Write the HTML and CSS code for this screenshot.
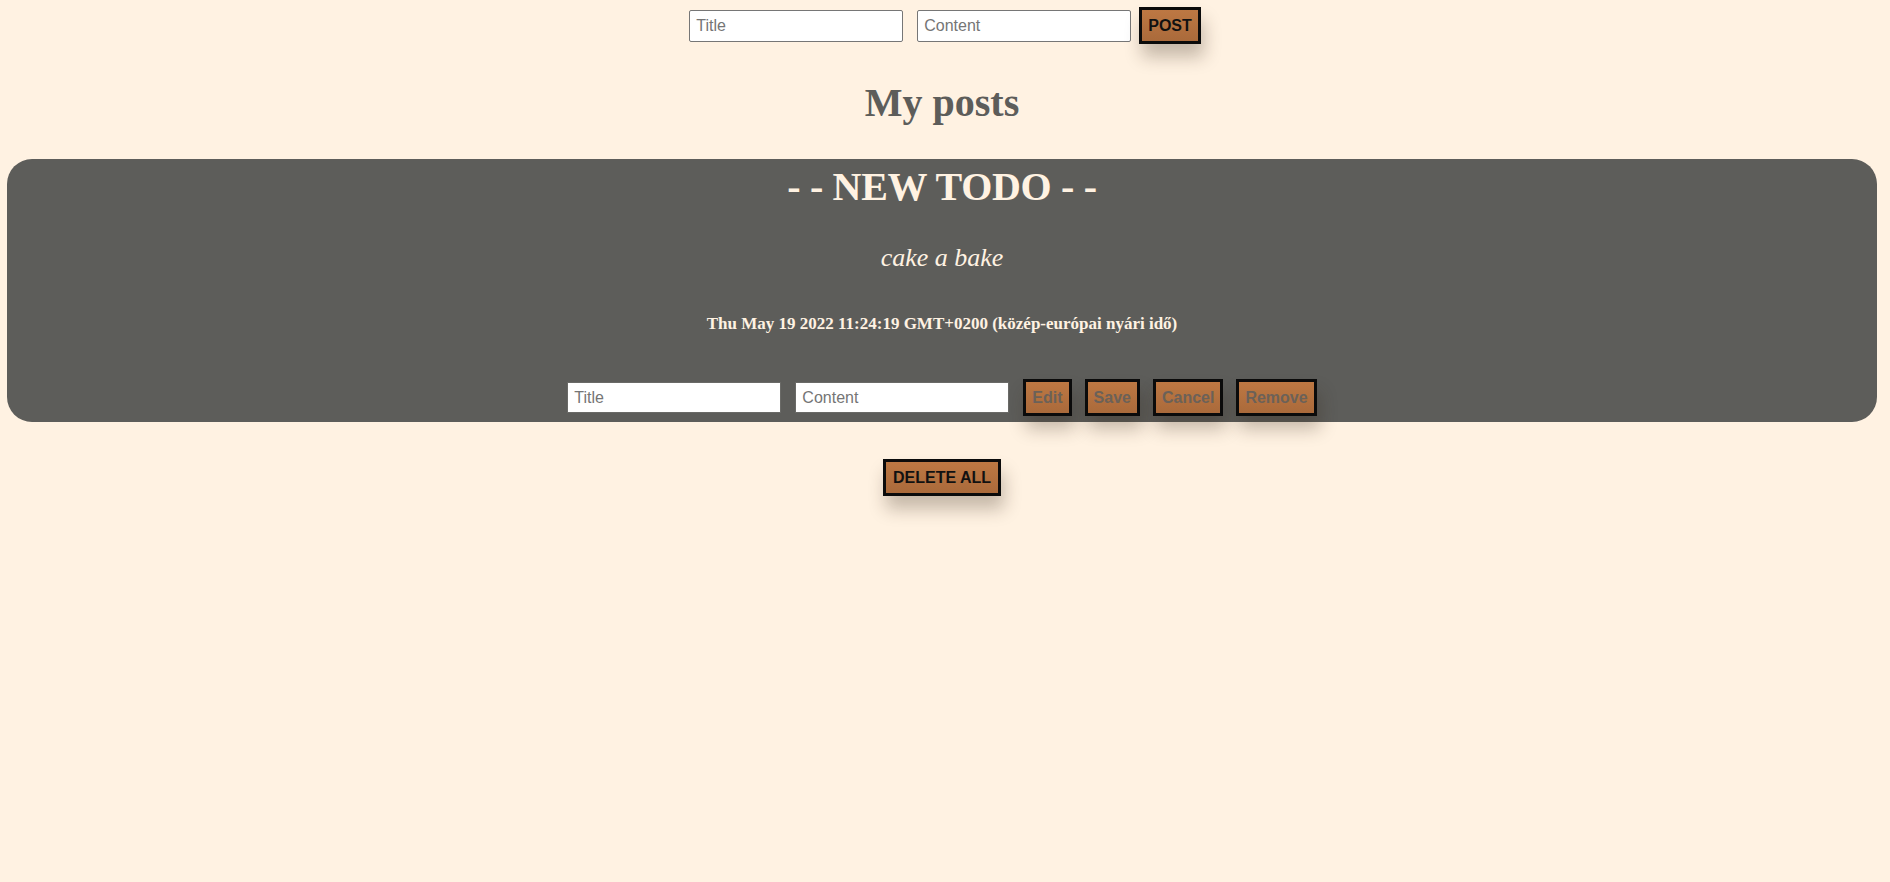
FILE: index.html
```html
<!DOCTYPE html>
<html lang="hu">
<head>
<meta charset="utf-8">
<title>My posts</title>
<link rel="stylesheet" href="styles.css">
</head>
<body>
  <form class="new-form">
    <input class="field" type="text" placeholder="Title">
    <input class="field" type="text" placeholder="Content">
    <button class="btn" type="button">POST</button>
  </form>
  <main class="page">
    <h1 class="page-title">My posts</h1>
    <section class="card">
      <h1 class="card-title">- - NEW TODO - -</h1>
      <h2 class="card-content">cake a bake</h2>
      <p class="card-date">Thu May 19 2022 11:24:19 GMT+0200 (közép-európai nyári idő)</p>
      <div class="card-actions">
        <input class="field field-inner" type="text" placeholder="Title">
        <input class="field field-inner" type="text" placeholder="Content">
        <button class="btn btn-muted" type="button">Edit</button>
        <button class="btn btn-muted" type="button">Save</button>
        <button class="btn btn-muted" type="button">Cancel</button>
        <button class="btn btn-muted" type="button">Remove</button>
      </div>
    </section>
    <div class="footer-actions">
      <button class="btn" type="button">DELETE ALL</button>
    </div>
  </main>
</body>
</html>
```

FILE: styles.css
```css
html, body {
  margin: 0;
  padding: 0;
}

body {
  background: #fff2e2;
  font-family: "Liberation Serif", "Times New Roman", serif;
  min-height: 882px;
}

.new-form {
  display: flex;
  justify-content: center;
  align-items: center;
  margin: 0;
  padding-top: 7px;
}

.new-form .field + .field {
  margin-left: 14px;
}

.new-form .btn {
  margin-left: 8px;
}

.field {
  box-sizing: border-box;
  width: 214px;
  height: 32px;
  padding: 6px 6px;
  border: 1px solid #767676;
  border-radius: 2px;
  background: #ffffff;
  font-family: "Liberation Sans", Arial, sans-serif;
  font-size: 16px;
  color: #222;
  outline: none;
}

.field::placeholder {
  color: #757575;
}

.btn {
  box-sizing: border-box;
  height: 37px;
  padding: 0 6px;
  border: 3px solid #0b0b0b;
  border-radius: 0;
  background: linear-gradient(#bd7843, #aa6a3b);
  font-family: "Liberation Sans", Arial, sans-serif;
  font-size: 16px;
  font-weight: bold;
  color: #111;
  box-shadow: 3px 13px 17px rgba(50, 35, 20, 0.28);
  cursor: pointer;
}

.page {
  padding: 0 13px 0 7px;
}

.page-title {
  margin: 36px 0 0;
  text-align: center;
  font-size: 40px;
  font-weight: bold;
  line-height: 46px;
  color: #5d5d5a;
}

.card {
  margin-top: 33px;
  padding: 5px 0 6px;
  background: #5d5d5a;
  border-radius: 25px;
  text-align: center;
  color: #fff2e2;
}

.card-title {
  margin: 0;
  font-size: 40px;
  font-weight: bold;
  line-height: 46px;
  letter-spacing: -0.3px;
}

.card-content {
  margin: 33px 0 0;
  font-size: 26px;
  font-style: italic;
  font-weight: normal;
  line-height: 30px;
}

.card-date {
  margin: 41px 0 0;
  font-size: 17px;
  font-weight: bold;
  line-height: 20px;
}

.card-actions {
  margin-top: 45px;
  display: flex;
  justify-content: center;
  align-items: center;
  gap: 14px;
}

.field-inner {
  height: 31px;
  border: 1px solid #6a6a67;
  border-radius: 0;
}

.btn-muted {
  color: #6b6158;
}

.card-actions .btn + .btn {
  margin-left: -1px;
}

.footer-actions {
  margin-top: 37px;
  display: flex;
  justify-content: center;
}

.footer-actions .btn {
  padding: 0 7px;
}
```
